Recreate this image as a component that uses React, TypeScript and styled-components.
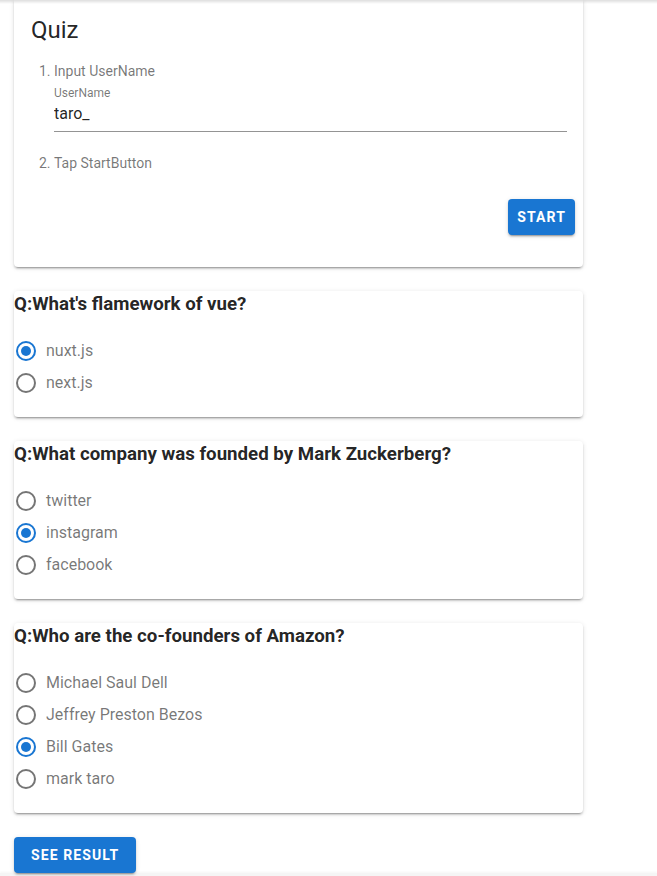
import React, { useState } from "react";
import styled, { createGlobalStyle, css } from "styled-components";

const GlobalStyle = createGlobalStyle`
  html, body { margin: 0; padding: 0; background: #ffffff; }
  body {
    font-family: Roboto, "Noto Sans", Arial, sans-serif;
    color: rgba(0,0,0,0.87);
    -webkit-font-smoothing: antialiased;
  }
`;

const TopShade = styled.div`
  position: fixed;
  top: 0;
  left: 0;
  right: 0;
  height: 4px;
  background: linear-gradient(rgba(0,0,0,0.13), rgba(0,0,0,0));
  pointer-events: none;
  z-index: 5;
`;

const Page = styled.main`
  padding: 0 74px 0 14px;
  display: flex;
  flex-direction: column;
  gap: 24px;
`;

const Card = styled.section<{ $cutTop?: boolean }>`
  background: #fff;
  border-radius: 4px;
  box-shadow: 0 3px 1px -2px rgba(0,0,0,0.2), 0 2px 2px 0 rgba(0,0,0,0.14),
    0 1px 5px 0 rgba(0,0,0,0.12);
  ${(p) =>
    p.$cutTop &&
    css`
      border-top-left-radius: 0;
      border-top-right-radius: 0;
    `}
`;

const IntroCard = styled(Card)`
  padding: 14px 8px 32px 16px;
  display: flex;
  flex-direction: column;
`;

const QuizTitle = styled.h1`
  margin: 0 0 0 1px;
  font-size: 24px;
  line-height: 32px;
  font-weight: 400;
  color: rgba(0,0,0,0.87);
  letter-spacing: 0;
`;

const Steps = styled.ol`
  margin: 15px 8px 0 0;
  padding: 0 0 0 24px;
  font-size: 14px;
  line-height: 20px;
  color: rgba(0,0,0,0.54);
`;

const Step = styled.li<{ $gap?: number }>`
  margin-top: ${(p) => p.$gap ?? 0}px;
`;

const Field = styled.div`
  margin-top: 4px;
  display: flex;
  flex-direction: column;
  border-bottom: 1px solid rgba(0,0,0,0.42);
`;

const FieldLabel = styled.label`
  font-size: 12px;
  line-height: 16px;
  color: rgba(0,0,0,0.54);
`;

const FieldInput = styled.input`
  border: none;
  outline: none;
  padding: 1px 0 5px;
  margin: 0;
  font-family: Roboto, Arial, sans-serif;
  font-size: 16px;
  line-height: 24px;
  color: rgba(0,0,0,0.87);
  background: transparent;
`;

const Actions = styled.div`
  display: flex;
  justify-content: flex-end;
  margin-top: 26px;
`;

const Button = styled.button<{ $pad: number }>`
  height: 36px;
  padding: 0 ${(p) => p.$pad}px;
  border: none;
  border-radius: 4px;
  background: #1976d2;
  color: #fff;
  font-family: Roboto, Arial, sans-serif;
  font-size: 14px;
  font-weight: 700;
  letter-spacing: 1.1px;
  text-transform: uppercase;
  box-shadow: 0 3px 1px -2px rgba(0,0,0,0.2), 0 2px 2px 0 rgba(0,0,0,0.14),
    0 1px 5px 0 rgba(0,0,0,0.12);
  cursor: pointer;
`;

const ResultRow = styled.div`
  display: flex;
`;

const QuestionCard = styled(Card)`
  padding-bottom: 22px;
`;

const Question = styled.h3`
  margin: 0;
  font-size: 18.7px;
  line-height: 27px;
  font-weight: 700;
  color: rgba(0,0,0,0.87);
`;

const Options = styled.div`
  margin-top: 21px;
  display: flex;
  flex-direction: column;
  gap: 8px;
`;

const Option = styled.label`
  display: flex;
  align-items: center;
  height: 24px;
  cursor: pointer;
`;

const OptionText = styled.span`
  margin-left: 8px;
  font-size: 16px;
  line-height: 24px;
  color: rgba(0,0,0,0.54);
`;

const Footer = styled.footer`
  height: 40px;
  background: #f5f5f5;
  box-shadow: 0 -1px 2px rgba(0,0,0,0.04);
`;

function RadioIcon({ checked }: { checked: boolean }) {
  const color = checked ? "#1976d2" : "rgba(0,0,0,0.54)";
  return (
    <svg width="24" height="24" viewBox="0 0 24 24" aria-hidden="true">
      <circle cx="12" cy="12" r="9" fill="none" stroke={color} strokeWidth="2" />
      {checked && <circle cx="12" cy="12" r="5" fill={color} />}
    </svg>
  );
}

type Q = { title: string; options: string[]; selected: number };

const questions: Q[] = [
  { title: "Q:What's flamework of vue?", options: ["nuxt.js", "next.js"], selected: 0 },
  {
    title: "Q:What company was founded by Mark Zuckerberg?",
    options: ["twitter", "instagram", "facebook"],
    selected: 1,
  },
  {
    title: "Q:Who are the co-founders of Amazon?",
    options: ["Michael Saul Dell", "Jeffrey Preston Bezos", "Bill Gates", "mark taro"],
    selected: 2,
  },
];

function QuestionBlock({ q }: { q: Q }) {
  const [sel, setSel] = useState(q.selected);
  return (
    <QuestionCard>
      <Question>{q.title}</Question>
      <Options role="radiogroup">
        {q.options.map((o, i) => (
          <Option key={o} onClick={() => setSel(i)}>
            <RadioIcon checked={sel === i} />
            <OptionText>{o}</OptionText>
          </Option>
        ))}
      </Options>
    </QuestionCard>
  );
}

export default function App() {
  const [name, setName] = useState("taro_");
  return (
    <>
      <GlobalStyle />
      <TopShade />
      <Page>
        <IntroCard $cutTop>
          <QuizTitle>Quiz</QuizTitle>
          <Steps>
            <Step>
              Input UserName
              <Field>
                <FieldLabel>UserName</FieldLabel>
                <FieldInput value={name} onChange={(e) => setName(e.target.value)} />
              </Field>
            </Step>
            <Step $gap={21}>Tap StartButton</Step>
          </Steps>
          <Actions>
            <Button $pad={9}>Start</Button>
          </Actions>
        </IntroCard>
        {questions.map((q, i) => (
          <QuestionBlock key={i} q={q} />
        ))}
        <ResultRow>
          <Button $pad={17}>See Result</Button>
        </ResultRow>
      </Page>
      <Footer />
    </>
  );
}
